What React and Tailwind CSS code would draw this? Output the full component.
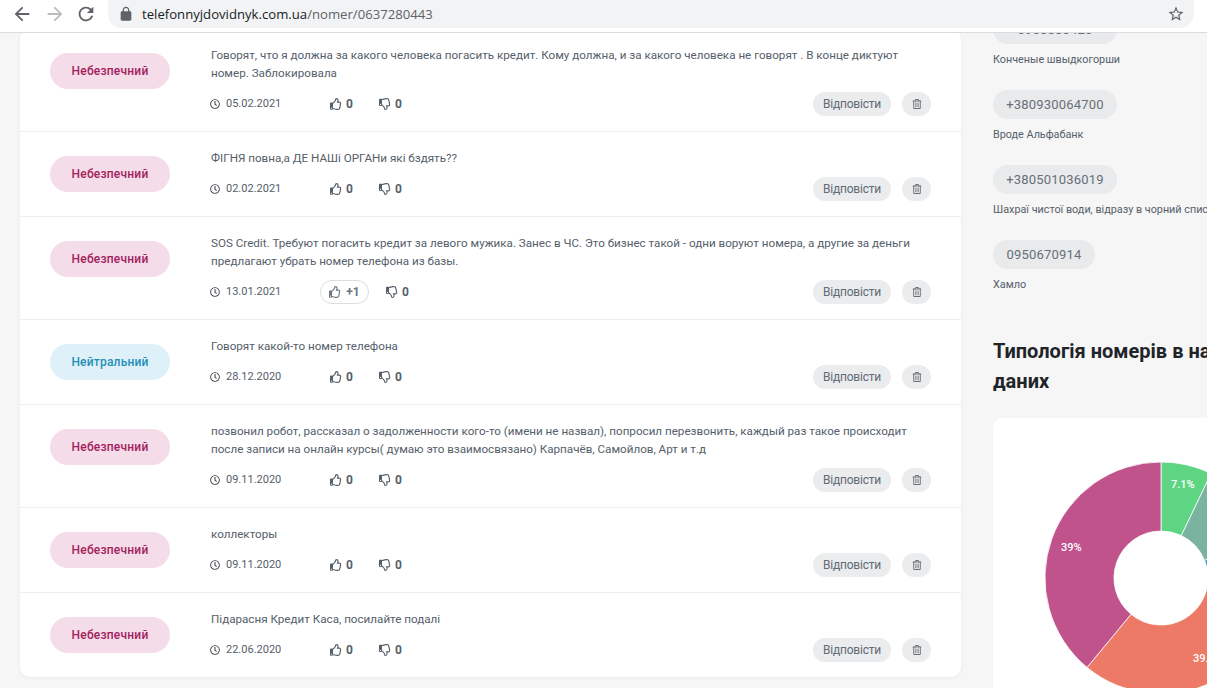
import React from "react";
import { FaRegClock, FaRegThumbsUp, FaRegThumbsDown, FaRegTrashAlt } from "react-icons/fa";

const comments = [
  { kind: "bad", text: "Говорят, что я должна за какого человека погасить кредит. Кому должна, и за какого человека не говорят . В конце диктуют номер. Заблокировала", date: "05.02.2021" },
  { kind: "bad", text: "ФІГНЯ повна,а ДЕ НАШі ОРГАНи які бздять??", date: "02.02.2021" },
  { kind: "bad", text: "SOS Credit. Требуют погасить кредит за левого мужика. Занес в ЧС. Это бизнес такой - одни воруют номера, а другие за деньги предлагают убрать номер телефона из базы.", date: "13.01.2021", liked: true },
  { kind: "neutral", text: "Говорят какой-то номер телефона", date: "28.12.2020" },
  { kind: "bad", text: "позвонил робот, рассказал о задолженности кого-то (имени не назвал), попросил перезвонить, каждый раз такое происходит после записи на онлайн курсы( думаю это взаимосвязано) Карпачёв, Самойлов, Арт и т.д", date: "09.11.2020" },
  { kind: "bad", text: "коллекторы", date: "09.11.2020" },
  { kind: "bad", text: "Підарасня Кредит Каса, посилайте подалі", date: "22.06.2020", last: true },
];

const numbers = [
  { phone: "0958880420", note: "Конченые швыдкогорши", width: "w-[124px]" },
  { phone: "+380930064700", note: "Вроде Альфабанк", width: "w-[124px]" },
  { phone: "+380501036019", note: "Шахраї чистої води, відразу в чорний список", width: "w-[124px]" },
  { phone: "0950670914", note: "Хамло", width: "w-[102px]" },
];

const slices = [
  { from: 0, to: 25.6, color: "#5dd583" },
  { from: 25.6, to: 68, color: "#7ab39f" },
  { from: 68, to: 79.2, color: "#3a9bd1" },
  { from: 79.2, to: 219.6, color: "#ec7a66" },
  { from: 219.6, to: 360, color: "#c0528c" },
];

const labels = [
  { x: 126, y: 26, text: "7.1%" },
  { x: 148, y: 200, text: "39.3%" },
  { x: 16, y: 89, text: "39%" },
];

const point = (r, deg) => {
  const a = (deg * Math.PI) / 180;
  return `${(116 + r * Math.sin(a)).toFixed(2)} ${(116 - r * Math.cos(a)).toFixed(2)}`;
};

const slicePath = (from, to) => {
  const large = to - from > 180 ? 1 : 0;
  return `M${point(116, from)}A116 116 0 ${large} 1 ${point(116, to)}L${point(47, to)}A47 47 0 ${large} 0 ${point(47, from)}Z`;
};

const Comment = ({ c }) => (
  <div className={`flex pl-[30px] pr-[30px] pt-[17px] pb-[15px] ${c.last ? "" : "border-b border-[#eeeeee]"}`}>
    <div className={`mt-[7px] flex h-[36px] w-[120px] shrink-0 items-center justify-center rounded-full text-[12px] font-medium tracking-[0.2px] ${c.kind === "bad" ? "bg-[#f4dde8] text-[#a3215f]" : "bg-[#def1f8] text-[#1f8fb8]"}`}>
      {c.kind === "bad" ? "Небезпечний" : "Нейтральний"}
    </div>
    <div className="ml-[41px] min-w-0 flex-1">
      <p className="text-[11.65px] leading-[18px] text-[#55606a]">{c.text}</p>
      <div className="mt-[10px] flex h-[24px] items-center text-[#55606a]">
        <FaRegClock className="ml-[-1px] h-[10px] w-[10px] text-[#4a4f55]" />
        <span className="ml-[6px] w-[104px] text-[11px]">{c.date}</span>
        {c.liked ? (
          <span className="ml-[-10px] flex h-[24px] w-[49px] items-center justify-center gap-[5px] rounded-full border border-[#dddddd] text-[12px] font-bold text-[#6b7680]">
            <FaRegThumbsUp className="h-[12px] w-[12px]" />
            +1
          </span>
        ) : (
          <span className="flex items-center gap-[4px] text-[12px] font-bold">
            <FaRegThumbsUp className="h-[12px] w-[12px]" />0
          </span>
        )}
        <span className={`flex items-center gap-[4px] text-[12px] font-bold ${c.liked ? "ml-[17px]" : "ml-[26px]"}`}>
          <FaRegThumbsDown className="h-[12px] w-[12px]" />0
        </span>
        <span className="ml-auto flex h-[24px] w-[78px] items-center justify-center rounded-full bg-[#ebeced] text-[12px] tracking-[-0.2px] text-[#5f6b75]">Відповісти</span>
        <span className="ml-[11px] flex h-[24px] w-[29px] items-center justify-center rounded-full bg-[#ebeced] text-[#6a6f74]">
          <FaRegTrashAlt className="h-[10px] w-[10px]" />
        </span>
      </div>
    </div>
  </div>
);

export default function App() {
  return (
    <div className="flex h-[688px] w-[1207px] flex-col overflow-hidden bg-[#f6f6f6] font-['Roboto',sans-serif]">
      {/* browser bar */}
      <div className="relative z-10 flex h-[33px] shrink-0 items-start border-b border-[#dadce0] bg-white pr-[13px]">
        <svg viewBox="0 0 24 24" className="ml-[11px] mt-[3px] h-[22px] w-[22px] fill-[#5f6368]">
          <path d="M20 11H7.83l5.59-5.59L12 4l-8 8 8 8 1.41-1.41L7.83 13H20v-2z" />
        </svg>
        <svg viewBox="0 0 24 24" className="ml-[11px] mt-[3px] h-[22px] w-[22px] fill-[#babcbe]">
          <path d="M4 11h12.17l-5.59-5.59L12 4l8 8-8 8-1.41-1.41L16.17 13H4v-2z" />
        </svg>
        <svg viewBox="0 0 24 24" className="ml-[9px] mt-[3px] h-[22px] w-[22px] fill-[#5f6368]">
          <path d="M17.65 6.35A7.958 7.958 0 0 0 12 4c-4.42 0-7.99 3.58-7.99 8s3.57 8 7.99 8c3.73 0 6.84-2.55 7.73-6h-2.08A5.99 5.99 0 0 1 12 18c-3.31 0-6-2.69-6-6s2.69-6 6-6c1.66 0 3.14.69 4.22 1.78L13 11h7V4l-2.35 2.35z" />
        </svg>
        <div className="ml-[11px] flex h-[28px] flex-1 items-center rounded-br-[14px] rounded-bl-[14px] bg-[#f1f3f4] pl-[10px] pr-[9px]">
          <svg viewBox="0 0 24 24" className="h-[16px] w-[16px] fill-[#5f6368]">
            <path d="M18 8h-1V6c0-2.76-2.24-5-5-5S7 3.24 7 6v2H6c-1.1 0-2 .9-2 2v10c0 1.1.9 2 2 2h12c1.1 0 2-.9 2-2V10c0-1.1-.9-2-2-2zM9 6c0-1.66 1.34-3 3-3s3 1.34 3 3v2H9V6z" />
          </svg>
          <span className="ml-[8px] mt-[1px] font-['Open_Sans',sans-serif] text-[13.15px] text-[#202124]">
            telefonnyjdovidnyk.com.ua<span className="text-[#5f6368]">/nomer/0637280443</span>
          </span>
          <svg viewBox="0 0 24 24" className="ml-auto h-[18px] w-[18px] fill-[#5f6368]">
            <path d="M22 9.24l-7.19-.62L12 2 9.19 8.63 2 9.24l5.46 4.73L5.82 21 12 17.27 18.18 21l-1.63-7.03L22 9.24zM12 15.4l-3.76 2.27 1-4.28-3.32-2.88 4.38-.38L12 6.1l1.71 4.04 4.38.38-3.32 2.88 1 4.28L12 15.4z" />
          </svg>
        </div>
      </div>

      <div className="flex min-h-0 flex-1 items-start pl-[20px]">
        {/* comments */}
        <div className="mt-[-4px] w-[941px] shrink-0 rounded-[10px] bg-white shadow-[0_1px_4px_rgba(0,0,0,0.05)]">
          {comments.map((c) => (
            <Comment key={c.date + c.text.length} c={c} />
          ))}
        </div>

        {/* sidebar */}
        <div className="ml-[32px] mt-[-18px] w-[336px] shrink-0">
          {numbers.map((n) => (
            <div key={n.phone} className="mb-[31px] h-[44px]">
              <div className={`flex h-[29px] items-center justify-center rounded-full bg-[#e9eaeb] text-[13px] tracking-[0.2px] text-[#66707a] ${n.width}`}>
                {n.phone}
              </div>
              <div className="mt-[9px] whitespace-nowrap text-[10.8px] leading-[14px] text-[#55606a]">{n.note}</div>
            </div>
          ))}
          <h2 className="mt-[52px] w-[320px] text-[20px] font-bold leading-[30px] text-[#1f2429]">Типологія номерів в нашій базі даних</h2>
          <div className="mt-[22px] h-[400px] rounded-[10px] bg-white pt-[44px]">
            <svg viewBox="0 0 232 232" className="mx-auto h-[232px] w-[232px]">
              {slices.map((s) => (
                <path key={s.from} d={slicePath(s.from, s.to)} fill={s.color} stroke="#ffffff" strokeWidth="0.8" />
              ))}
              {labels.map((l) => (
                <text key={l.text} x={l.x} y={l.y} fontSize="11" fontWeight="500" fill="#ffffff" fontFamily="Roboto, sans-serif">
                  {l.text}
                </text>
              ))}
            </svg>
          </div>
        </div>
      </div>
    </div>
  );
}
